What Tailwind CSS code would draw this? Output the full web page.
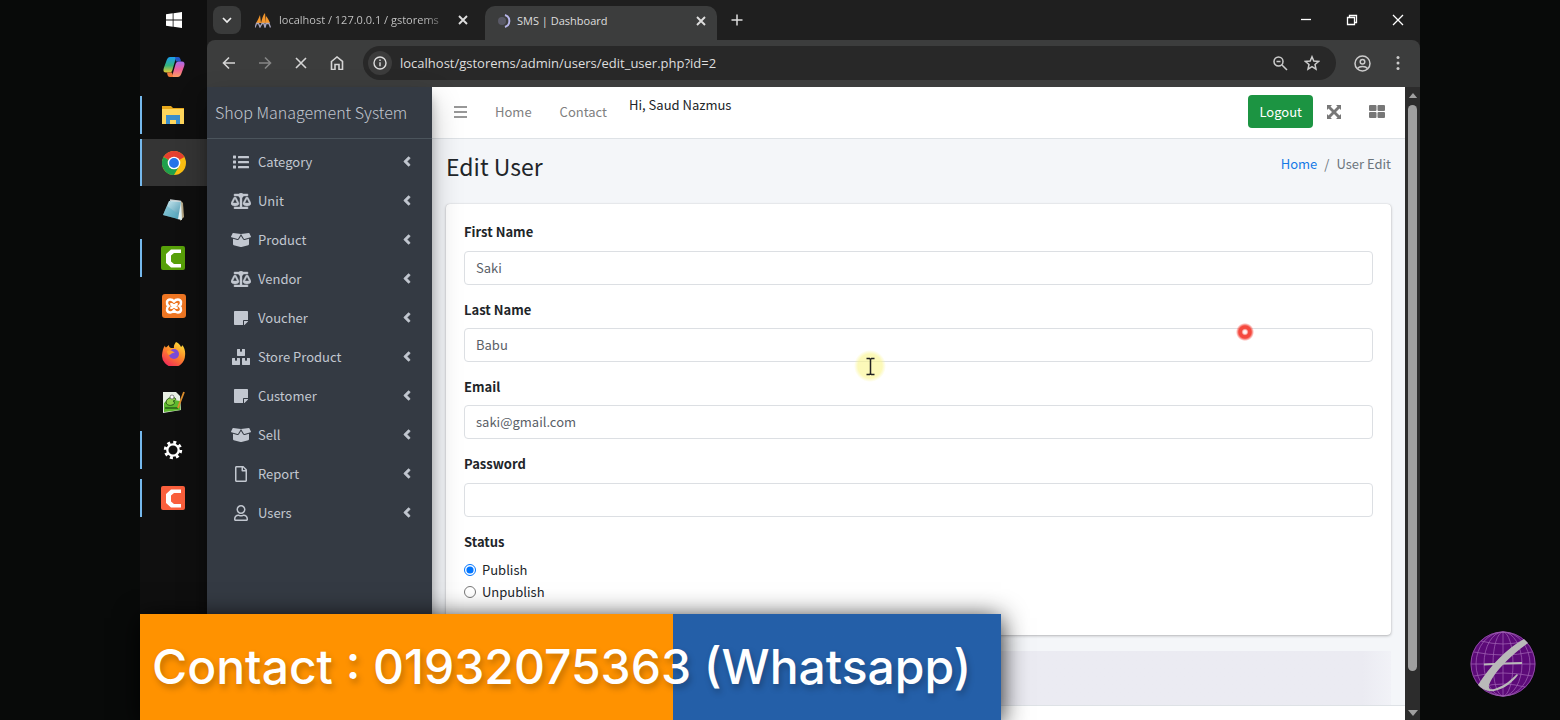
<!DOCTYPE html>
<html lang="en">
<head>
<meta charset="utf-8">
<title>SMS | Dashboard</title>
<script src="https://cdn.jsdelivr.net/npm/@tailwindcss/browser@4"></script>
</head>
<body class="bg-[#080a09]">
<svg class="hidden" aria-hidden="true">
  <symbol id="list" viewBox="0 0 512 512"><rect y="48" width="96" height="96" rx="16"/><rect y="208" width="96" height="96" rx="16"/><rect y="368" width="96" height="96" rx="16"/><rect x="160" y="60" width="352" height="72" rx="16"/><rect x="160" y="220" width="352" height="72" rx="16"/><rect x="160" y="380" width="352" height="72" rx="16"/></symbol>
  <symbol id="scale" viewBox="0 0 640 512"><path stroke="currentColor" stroke-width="14" d="M256 336h-.02c0-16.18 1.34-8.73-85.05-181.51-17.65-35.29-68.19-35.36-85.87 0C-2.06 328.75.02 320.33.02 336H0c0 44.18 57.31 80 128 80s128-35.82 128-80zM128 176l72 144H56l72-144zm511.98 160c0-16.18 1.34-8.73-85.05-181.51-17.65-35.29-68.19-35.36-85.87 0-87.12 174.26-85.04 165.84-85.04 181.51H384c0 44.18 57.31 80 128 80s128-35.82 128-80h-.02zM440 320l72-144 72 144H440zm88 128H352V153.25c23.51-10.29 41.16-31.48 46.39-57.25H528c8.84 0 16-7.16 16-16V48c0-8.84-7.16-16-16-16H383.64C369.04 12.68 346.09 0 320 0s-49.04 12.68-63.64 32H112c-8.84 0-16 7.16-16 16v32c0 8.84 7.16 16 16 16h129.61c5.23 25.76 22.87 46.96 46.39 57.25V448H112c-8.84 0-16 7.16-16 16v32c0 8.84 7.16 16 16 16h416c8.84 0 16-7.16 16-16v-32c0-8.84-7.16-16-16-16z"/></symbol>
  <symbol id="box" viewBox="0 0 640 512"><path d="M425.7 256c-16.9 0-32.8-9-41.4-23.4L320 126l-64.2 106.6c-8.7 14.5-24.6 23.5-41.5 23.5-4.5 0-9-.6-13.3-1.9L64 215v178c0 14.7 10 27.5 24.2 31l216.2 54.1c10.2 2.5 20.9 2.5 31 0L551.8 424c14.2-3.6 24.2-16.4 24.2-31V215l-137 39.1c-4.3 1.3-8.8 1.9-13.3 1.9zm212.6-112.2L586.8 41c-3.1-6.2-9.8-9.8-16.7-8.9L320 64l91.7 152.1c3.8 6.3 11.4 9.3 18.5 7.3l197.9-56.5c9.9-2.9 14.7-13.9 10.2-23.1zM53.2 41L1.7 143.8c-4.6 9.2.3 20.2 10.1 23l197.9 56.5c7.1 2 14.7-1 18.5-7.3L320 64 69.8 32.1c-6.9-.8-13.5 2.7-16.6 8.9z"/></symbol>
  <symbol id="note" viewBox="0 0 448 512"><path d="M312 320h136V56c0-13.3-10.7-24-24-24H24C10.7 32 0 42.7 0 56v400c0 13.3 10.7 24 24 24h264V344c0-13.2 10.8-24 24-24zm129 55l-98 98c-4.5 4.5-10.6 7-17 7h-6V352h128v6.1c0 6.3-2.5 12.4-7 16.9z"/></symbol>
  <symbol id="boxes" viewBox="0 0 576 512"><path d="M560 288h-80v96l-32-21.3-32 21.3v-96h-80c-8.8 0-16 7.2-16 16v192c0 8.8 7.2 16 16 16h224c8.8 0 16-7.2 16-16V304c0-8.8-7.2-16-16-16zM176 224h224c8.8 0 16-7.2 16-16V16c0-8.8-7.2-16-16-16h-80v96l-32-21.3L256 96V0h-80c-8.8 0-16 7.2-16 16v192c0 8.8 7.2 16 16 16zM240 288h-80v96l-32-21.3L96 384v-96H16c-8.8 0-16 7.2-16 16v192c0 8.8 7.2 16 16 16h224c8.8 0 16-7.2 16-16V304c0-8.8-7.2-16-16-16z"/></symbol>
  <symbol id="file" viewBox="0 0 384 512"><path d="M369.9 97.9L286 14C277 5 264.8 0 252.1 0H48C21.5 0 0 21.5 0 48v416c0 26.5 21.5 48 48 48h288c26.5 0 48-21.5 48-48V131.9c0-12.7-5.1-25-14.1-34zM332.1 128H256V51.9l76.1 76.1zM48 464V48h160v104c0 13.3 10.7 24 24 24h104v288H48z"/></symbol>
  <symbol id="user" viewBox="0 0 448 512"><path d="M313.6 304c-28.7 0-42.5 16-89.6 16-47.1 0-60.8-16-89.6-16C60.2 304 0 364.2 0 438.4V464c0 26.5 21.5 48 48 48h352c26.5 0 48-21.5 48-48v-25.6c0-74.2-60.2-134.4-134.4-134.4zM400 464H48v-25.6c0-47.6 38.8-86.4 86.4-86.4 14.6 0 38.3 16 89.6 16 51.7 0 74.9-16 89.6-16 47.6 0 86.4 38.8 86.4 86.4V464zM224 288c79.5 0 144-64.5 144-144S303.5 0 224 0 80 64.5 80 144s64.500 144 144 144zm0-240c52.9 0 96 43.1 96 96s-43.1 96-96 96-96-43.1-96-96 43.1-96 96-96z"/></symbol>
  <symbol id="left" viewBox="0 0 256 512"><path stroke="currentColor" stroke-width="24" d="M31.7 239l136-136c9.4-9.4 24.6-9.4 33.9 0l22.6 22.6c9.4 9.4 9.4 24.6 0 33.9L127.9 256l96.4 96.4c9.4 9.4 9.4 24.6 0 33.9L201.7 409c-9.4 9.4-24.6 9.4-33.9 0l-136-136c-9.5-9.4-9.5-24.6-.1-34z"/></symbol>
  <symbol id="x" viewBox="0 0 12 12"><path d="M2 2l8 8m0-8l-8 8" fill="none" stroke="currentColor" stroke-width="1.9"/></symbol>
</svg>

<div class="relative flex h-screen overflow-hidden px-[140px] font-['Noto_Sans_CJK_SC',sans-serif]">

  <!-- Taskbar -->
  <nav aria-label="Taskbar" class="flex w-[67px] shrink-0 flex-col bg-[#0f0f0f]">
    <button aria-label="Start" class="flex h-[43px] shrink-0 items-center justify-center pb-1"><svg class="size-4" viewBox="0 0 16 16" fill="#fff"><path d="M0 2.300L6.700 1.300v6.200H0zM7.500 1.200L16 0v7.500H7.500zM0 8.400h6.700v6.300L0 13.700zM7.500 8.400H16V16l-8.500-1.200z"/></svg></button>
    <button aria-label="Copilot" class="flex h-12 shrink-0 items-center justify-center"><svg class="size-6" viewBox="0 0 24 24"><defs><linearGradient id="cpa" x1="0" y1="0" x2="0" y2="1"><stop offset="0" stop-color="#1b9df0"/><stop offset=".55" stop-color="#35b47d"/><stop offset="1" stop-color="#e8c932"/></linearGradient><linearGradient id="cpb" x1="0" y1="0" x2="0" y2="1"><stop offset="0" stop-color="#a56cf0"/><stop offset=".5" stop-color="#ee5f9b"/><stop offset="1" stop-color="#fb9e62"/></linearGradient></defs><path d="M15 2H8.500C6 2 5 4 4.200 6.500L1.800 13c-1 3 0 4.500 2.400 4.500h3.300c1.600 0 2.400-1 2.900-2.600L13 6c.6-2 1-3 3-3z" fill="url(#cpa)"/><path d="M13 2h3c2 0 2.400 1.500 3 4.500h-5z" fill="#2257c9"/><path d="M9 22h6.500c2.500 0 3.500-2 4.300-4.500l2.400-6.500c1-3 0-4.500-2.400-4.500h-3.300c-1.600 0-2.400 1-2.900 2.600L11 18c-.6 2-1 3-3 3z" fill="url(#cpb)"/><path d="M11 22H8c-2 0-2.500-1.500-3-4.500h5z" fill="#f27a3c"/></svg></button>
    <button aria-label="File Explorer" class="flex h-12 shrink-0 items-center justify-center"><svg class="h-10 w-full" viewBox="0 0 67 40" fill="none"><path d="M0 1h2v38H0z" fill="#76b9ed"/><path d="M22 11h9l2 2h11v16H22z" fill="#e8a91c"/><path d="M22 14h22v15H22z" fill="#ffd65c"/><path d="M26 29v-9h14v9h-4v-4h-6v4z" fill="#3c8ecb"/></svg></button>
    <button aria-label="Chrome" class="flex h-[47px] shrink-0 items-center justify-center border-x-2 border-l-[#76b9ed] border-r-[#343434] bg-[#343434]"><svg class="size-6" viewBox="0 0 24 24"><circle cx="12" cy="12" r="12" fill="#fbbf12"/><path d="M12 12L1.600 6A12 12 0 0 1 22.400 6z" fill="#e5402f"/><path d="M1.600 6A12 12 0 0 0 12 24l5.200-9z" fill="#1fa04c"/><circle cx="12" cy="12" r="6.300" fill="#fff"/><circle cx="12" cy="12" r="4.900" fill="#2674e8"/></svg></button>
    <button aria-label="Notepad" class="flex h-12 shrink-0 items-center justify-center"><svg class="size-6" viewBox="0 0 24 24"><defs><linearGradient id="np" x1="0" y1="0" x2="1" y2="1"><stop offset="0" stop-color="#d5f1f7"/><stop offset="1" stop-color="#3f8ea8"/></linearGradient></defs><path d="M19 3l2 2 1 14-4 4z" fill="#b2a483"/><path d="M8 2l11 1 1 19-5-1z" fill="#dff0f3"/><path d="M7 3l12 1-3 17L1 17z" fill="url(#np)"/><path d="M8 2l11 1.500" stroke="#c9d2d4" stroke-width="1.500"/><path d="M5 8l11 8v5L1 17z" fill="#5ab0c6" opacity=".5"/></svg></button>
    <button aria-label="Camtasia" class="flex h-12 shrink-0 items-center justify-center"><svg class="h-10 w-full" viewBox="0 0 67 40" fill="none"><path d="M0 1h2v38H0z" fill="#76b9ed"/><rect x="21" y="8" width="24" height="24" rx="2" fill="#57a009"/><path d="M41 11.500H31l-5 4.500v9l5 4.500h10V26h-7l-3-2.500v-6l3-2.500h7z" fill="#fff"/></svg></button>
    <button aria-label="XAMPP" class="flex h-12 shrink-0 items-center justify-center"><svg class="size-6" viewBox="0 0 24 24" fill="none"><rect width="24" height="24" rx="3" fill="#ee7623"/><path d="M8.200 5.500c2 0 3 1 3.800 2 .8-1 1.800-2 3.800-2 3.800 0 4.200 4.500 1.700 6.500 2.500 2 2.100 6.500-1.700 6.500-2 0-3-1-3.800-2-.8 1-1.800 2-3.800 2-3.800 0-4.200-4.500-1.700-6.500-2.500-2-2.100-6.500 1.700-6.500zM9.500 9v1.500c0 1 5 1 5 0V9M9.500 15v-1.500c0-1 5-1 5 0V15" stroke="#fff" stroke-width="2.500"/></svg></button>
    <button aria-label="Firefox" class="flex h-12 shrink-0 items-center justify-center"><svg class="size-6" viewBox="0 0 24 24"><defs><linearGradient id="ff" x1=".8" y1="0" x2=".2" y2="1"><stop offset="0" stop-color="#ffe23a"/><stop offset=".45" stop-color="#ff8a2a"/><stop offset="1" stop-color="#f0205c"/></linearGradient></defs><path d="M14 0c3 1 4 3 5 5 1-.5 1-1.500 1-2 3 3 3.500 7 3 11a11.500 11.500 0 0 1-23-1C.5 9 1 6 3 3.500c0 1 .5 2 1 2L7 3c0 2 .5 2.500 2 3h3c-.5-2 .5-4 2-6z" fill="url(#ff)"/><circle cx="12" cy="12" r="5" fill="#7a4bd8"/><path d="M5 9c3-2 6 0 8 2-2-.5-3 .5-4.500 1.500C6 14 5 11 5 9z" fill="#ff9a2c"/></svg></button>
    <button aria-label="Notepad++" class="flex h-12 shrink-0 items-center justify-center"><svg class="size-6" viewBox="0 0 24 24"><path d="M1 2h13l4 4 1 14-18 3z" fill="#e9f0e4"/><path d="M2 13c4-4 10-3 16-2l.5 9L2 22z" fill="#5db92f"/><path d="M4 12c1-5 7-5 9-4 2 2-1 3-2 3 2 0 2 4-1 4-2 1-6 0-6-3z" fill="#8dcf49" stroke="#275416"/><circle cx="10" cy="7" r="2" fill="#fff" stroke="#444" stroke-width=".6"/><path d="M3 18h13" stroke="#265f16" stroke-width="1.500"/><path d="M22 2l-5 13-1 3" stroke="#dd8e2c" stroke-width="1.800" fill="none"/></svg></button>
    <button aria-label="Settings" class="flex h-12 shrink-0 items-center justify-center"><svg class="h-10 w-full" viewBox="0 0 67 40" fill="none" stroke="#fff"><path d="M0 1h2v38H0z" fill="#76b9ed" stroke="none"/><circle cx="33" cy="20" r="5.700" stroke-width="2.300"/><circle cx="33" cy="20" r="7.700" stroke-width="3" stroke-dasharray="3 3.050"/></svg></button>
    <button aria-label="Camtasia Recorder" class="flex h-12 shrink-0 items-center justify-center"><svg class="h-10 w-full" viewBox="0 0 67 40" fill="none"><path d="M0 1h2v38H0z" fill="#76b9ed"/><rect x="21" y="8" width="24" height="24" rx="2" fill="#fa5f3c"/><path d="M41 11.500H31l-5 4.500v9l5 4.500h10V26h-7l-3-2.500v-6l3-2.500h7z" fill="#fff"/></svg></button>
  </nav>

  <!-- Browser window -->
  <div class="flex min-w-0 flex-1 flex-col bg-[#1f1f1f] font-['Open_Sans',sans-serif]">
    <div class="flex h-10 shrink-0 items-center text-[11px] text-[#dedede]">
      <button aria-label="Search tabs" class="ml-[6px] flex size-7 items-center justify-center rounded-lg bg-[#3a3b3b]"><svg class="size-3" viewBox="0 0 12 12" fill="none" stroke="#eee" stroke-width="1.700"><path d="M2 4l4 4 4-4"/></svg></button>
      <div class="flex h-8 w-[244px] items-center gap-2 pl-[14px] pr-[16px]">
        <svg class="size-4 shrink-0" viewBox="0 0 16 16"><path d="M1 11C3 8 4 5 5 3l1 8zM6 11c1-4 2-8 4-10l1 10zM11 11V4c2 2 3 5 4 7z" fill="#f3962c"/><path d="M0 15.500l1.500-4h2L5 15l2-3.500h2l1 4 1-4h3l1.500 4" stroke="#a6a4bd" stroke-width="1.300" fill="none"/></svg>
        <span class="min-w-0 flex-1 whitespace-nowrap bg-linear-to-r from-[#c9c9c9] from-85% to-[#333333] bg-clip-text text-transparent">localhost / 127.0.0.1 / gstorems</span>
        <button aria-label="Close tab"><svg class="size-3"><use href="#x"/></svg></button>
      </div>
      <div class="flex h-[34px] w-[232px] items-center self-end rounded-t-[10px] bg-[#3c3d3d] pb-1 pl-[11px] pr-[10px]">
        <svg class="mr-1 size-4" viewBox="0 0 16 16" fill="none"><circle cx="6" cy="8" r="4" fill="#595966"/><path d="M9 2a6.300 6.300 0 0 1 0 12" stroke="#b8b7ea" stroke-width="2"/></svg>
        <span class="flex-1 pl-px">SMS | Dashboard</span>
        <button aria-label="Close tab"><svg class="size-3"><use href="#x"/></svg></button>
      </div>
      <button aria-label="New tab" class="ml-[14px]"><svg class="size-3" viewBox="0 0 12 12" stroke="#ddd" stroke-width="1.500"><path d="M6 .5v11M.5 6h11"/></svg></button>
      <div class="ml-auto flex items-center gap-[34px] pr-4 text-white">
        <button aria-label="Minimize"><svg class="size-3" viewBox="0 0 12 12" stroke="#fff" stroke-width="1.300"><path d="M1 5.500h10"/></svg></button>
        <button aria-label="Restore"><svg class="size-3" viewBox="0 0 12 12" fill="none" stroke="#fff" stroke-width="1.300"><path d="M1.500 3.500h7v7h-7zM3.500 3.500v-2h7v7h-2"/></svg></button>
        <button aria-label="Close"><svg class="size-3" viewBox="0 0 12 12" stroke="#fff" stroke-width="1.300"><path d="M1 1l10 10M11 1L1 11"/></svg></button>
      </div>
    </div>
    <div class="flex h-[47px] shrink-0 items-center rounded-t-lg bg-[#3c3d3d] pb-px text-[#d0d0d0]">
      <div class="flex w-[156px] items-center gap-[22px] pl-[15px]">
        <button aria-label="Back"><svg class="size-[14px]" viewBox="0 0 14 14" fill="none" stroke="#d5d5d5" stroke-width="1.600"><path d="M13 7H2M7 1.500L1.500 7 7 12.500"/></svg></button>
        <button aria-label="Forward"><svg class="size-[14px]" viewBox="0 0 14 14" fill="none" stroke="#858585" stroke-width="1.600"><path d="M1 7h11M7 1.500L12.500 7 7 12.500"/></svg></button>
        <button aria-label="Stop"><svg class="size-[14px]" viewBox="0 0 14 14" fill="none" stroke="#d5d5d5" stroke-width="1.600"><path d="M2 2l10 10M12 2L2 12"/></svg></button>
        <button aria-label="Home"><svg class="size-[14px]" viewBox="0 0 14 14" fill="none" stroke="#d5d5d5" stroke-width="1.600"><path d="M1.500 5.500L7 1l5.500 4.500v8H9V8.500H5v5H1.500z"/></svg></button>
      </div>
      <div class="flex h-[34px] flex-1 items-center rounded-full bg-[#282828] px-[5px]">
        <span class="flex size-6 items-center justify-center rounded-full bg-[#3c3c3c]"><svg class="size-[14px]" viewBox="0 0 14 14" fill="none" stroke="#ddd" stroke-width="1.400"><circle cx="7" cy="7" r="6"/><path d="M7 6.300v4M7 3.500v1.500"/></svg></span>
        <input aria-label="Address" value="localhost/gstorems/admin/users/edit_user.php?id=2" class="h-6 min-w-0 flex-1 bg-transparent pl-2 text-[13px] leading-6 text-[#dedede] outline-none">
        <button aria-label="Zoom" class="mr-4"><svg class="size-[15px]" viewBox="0 0 15 15" fill="none" stroke="#ccc" stroke-width="1.500"><circle cx="5.500" cy="5.500" r="4.500"/><path d="M9 9l5 5M3.500 5.500h4"/></svg></button>
        <button aria-label="Bookmark" class="mr-[11px]"><svg class="size-4" viewBox="0 0 16 16" fill="none" stroke="#ccc" stroke-width="1.500"><path d="M8 1.800l1.800 4.300 4.700.4L11 9.500l1 4.600-4-2.400-4 2.400 1-4.600L1.500 6.500l4.700-.4z"/></svg></button>
      </div>
      <button aria-label="Profile" class="ml-[18px]"><svg class="size-[17px]" viewBox="0 0 17 17" fill="none" stroke="#ccc" stroke-width="1.500"><circle cx="8.500" cy="8.500" r="7.500"/><circle cx="8.500" cy="6.800" r="2.300"/><path d="M3.500 13.500c2-2.700 8-2.700 10 0"/></svg></button>
      <button aria-label="Menu" class="ml-[19px] mr-[14px]"><svg class="h-4 w-4" viewBox="0 0 16 16" fill="#ccc"><circle cx="8" cy="2.500" r="1.500"/><circle cx="8" cy="8" r="1.500"/><circle cx="8" cy="13.500" r="1.500"/></svg></button>
    </div>

    <!-- Web page -->
    <div class="flex min-h-0 flex-1 font-['Noto_Sans_CJK_SC',sans-serif] text-[13px] text-[#212529]">
      <aside class="z-10 w-[225px] shrink-0 bg-[#343a43] text-[#c2c7d0] shadow-[0_14px_28px_rgba(0,0,0,0.25),0_10px_10px_rgba(0,0,0,0.22)]">
        <a href="#" class="flex h-[52px] items-center border-b border-[#4b545c] pl-2 pb-px text-[16px] font-light leading-6">Shop Management System</a>
        <nav aria-label="Main" class="flex flex-col gap-1 pl-6 pr-[21px] pt-[5px]">
          <a href="#" class="flex h-[35px] items-center"><svg class="mr-[7px] h-4 w-5 fill-current"><use href="#list"/></svg><span class="flex-1">Category</span><svg class="h-[15px] w-2 fill-current"><use href="#left"/></svg></a>
          <a href="#" class="flex h-[35px] items-center"><svg class="mr-[7px] h-4 w-5 fill-current"><use href="#scale"/></svg><span class="flex-1">Unit</span><svg class="h-[15px] w-2 fill-current"><use href="#left"/></svg></a>
          <a href="#" class="flex h-[35px] items-center"><svg class="mr-[7px] h-4 w-5 fill-current"><use href="#box"/></svg><span class="flex-1">Product</span><svg class="h-[15px] w-2 fill-current"><use href="#left"/></svg></a>
          <a href="#" class="flex h-[35px] items-center"><svg class="mr-[7px] h-4 w-5 fill-current"><use href="#scale"/></svg><span class="flex-1">Vendor</span><svg class="h-[15px] w-2 fill-current"><use href="#left"/></svg></a>
          <a href="#" class="flex h-[35px] items-center"><svg class="mr-[7px] h-4 w-5 fill-current"><use href="#note"/></svg><span class="flex-1">Voucher</span><svg class="h-[15px] w-2 fill-current"><use href="#left"/></svg></a>
          <a href="#" class="flex h-[35px] items-center"><svg class="mr-[7px] h-4 w-5 fill-current"><use href="#boxes"/></svg><span class="flex-1">Store Product</span><svg class="h-[15px] w-2 fill-current"><use href="#left"/></svg></a>
          <a href="#" class="flex h-[35px] items-center"><svg class="mr-[7px] h-4 w-5 fill-current"><use href="#note"/></svg><span class="flex-1">Customer</span><svg class="h-[15px] w-2 fill-current"><use href="#left"/></svg></a>
          <a href="#" class="flex h-[35px] items-center"><svg class="mr-[7px] h-4 w-5 fill-current"><use href="#box"/></svg><span class="flex-1">Sell</span><svg class="h-[15px] w-2 fill-current"><use href="#left"/></svg></a>
          <a href="#" class="flex h-[35px] items-center"><svg class="mr-[7px] h-4 w-5 fill-current"><use href="#file"/></svg><span class="flex-1">Report</span><svg class="h-[15px] w-2 fill-current"><use href="#left"/></svg></a>
          <a href="#" class="flex h-[35px] items-center"><svg class="mr-[7px] h-4 w-5 fill-current"><use href="#user"/></svg><span class="flex-1">Users</span><svg class="h-[15px] w-2 fill-current"><use href="#left"/></svg></a>
        </nav>
      </aside>

      <div class="flex min-w-0 flex-1 flex-col bg-[#f4f6f9]">
        <header class="flex h-[52px] shrink-0 items-center border-b border-[#dee2e6] bg-white pb-[2px] pl-[22px] pr-5 text-[#808080]">
          <button aria-label="Toggle menu"><svg class="h-3 w-[13px]" viewBox="0 0 13 12" stroke="#777" stroke-width="1.700"><path d="M0 1h13M0 6h13M0 11h13"/></svg></button>
          <a href="#" class="ml-7">Home</a>
          <a href="#" class="ml-7">Contact</a>
          <span class="ml-[22px] self-start pt-2 text-[#212529]">Hi, Saud Nazmus</span>
          <button class="ml-auto h-[33px] rounded-[4px] bg-[#1c9442] px-[11px] text-white">Logout</button>
          <button aria-label="Full screen" class="ml-[14px]"><svg class="size-[14px]" viewBox="0 0 14 14" fill="#777"><path d="M0 0h5L3.500 1.500 7 5l3.500-3.500L9 0h5v5l-1.500-1.500L9 7l3.500 3.500L14 9v5H9l1.500-1.500L7 9l-3.500 3.500L5 14H0V9l1.500 1.500L5 7 1.500 3.500 0 5z"/></svg></button>
          <button aria-label="Widgets" class="ml-7"><svg class="h-[13px] w-4" viewBox="0 0 16 13" fill="#777"><rect width="7.500" height="6" rx="1"/><rect x="8.500" width="7.500" height="6" rx="1"/><rect y="7" width="7.500" height="6" rx="1"/><rect x="8.500" y="7" width="7.500" height="6" rx="1"/></svg></button>
        </header>
        <main class="px-[14px]">
          <div class="flex h-[65px] items-start justify-between">
            <h1 class="pt-[11px] text-[23px] leading-8">Edit User</h1>
            <nav aria-label="Breadcrumb" class="flex gap-[7px] pt-[15px] leading-5 text-[#6c757d]"><a href="#" class="text-[#1579e6]">Home</a><span>/</span><span>User Edit</span></nav>
          </div>
          <form class="flex h-[431px] flex-col rounded-[4px] bg-white px-[18px] pt-[18px] shadow-[0_0_1px_rgba(0,0,0,0.2),0_1px_3px_rgba(0,0,0,0.25)]">
            <label for="fn" class="mb-[9px] font-bold leading-5">First Name</label>
            <input id="fn" value="Saki" class="mb-[15px] h-[34px] w-full rounded-[4px] border border-[#dcdfe3] px-[11px] pb-[2px] text-[#5a6067]">
            <label for="ln" class="mb-2 font-bold leading-5">Last Name</label>
            <input id="ln" value="Babu" class="mb-[15px] h-[34px] w-full rounded-[4px] border border-[#dcdfe3] px-[11px] pb-[2px] text-[#5a6067]">
            <label for="em" class="mb-2 font-bold leading-5">Email</label>
            <input id="em" type="email" value="saki@gmail.com" class="mb-[15px] h-[34px] w-full rounded-[4px] border border-[#dcdfe3] px-[11px] pb-[2px] text-[#5a6067]">
            <label for="pw" class="mb-[9px] font-bold leading-5">Password</label>
            <input id="pw" type="password" class="mb-[15px] h-[34px] w-full rounded-[4px] border border-[#dcdfe3] px-[11px] pb-[2px] text-[#5a6067]">
            <fieldset>
              <legend class="mb-[7px] font-bold leading-5">Status</legend>
              <label class="flex items-center gap-[6px] leading-[22px]"><input type="radio" name="st" checked class="size-3 accent-[#0075ff]">Publish</label>
              <label class="flex items-center gap-[6px] leading-[22px]"><input type="radio" name="st" class="size-3">Unpublish</label>
            </fieldset>
          </form>
          <div class="mt-4 h-[54px] bg-linear-to-r from-[#ebebf2] from-97% to-[#f1f2f7]"></div>
        </main>
        <footer class="flex-1 border-t border-[#dee2e6] bg-white"></footer>
      </div>
      <div class="flex w-[15px] shrink-0 flex-col items-center justify-between bg-[#2c2c2c] pt-[6px] pb-1">
        <svg class="h-[5px] w-[10px]" viewBox="0 0 10 6" fill="#a0a0a0"><path d="M0 6l5-6 5 6z"/></svg>
        <div class="mt-[7px] mb-[39px] w-[9px] flex-1 rounded-full bg-[#9f9f9f]"></div>
        <svg class="h-[6px] w-[10px] shrink-0" viewBox="0 0 10 6" fill="#a0a0a0"><path d="M0 0l5 6 5-6z"/></svg>
      </div>
    </div>
  </div>

  <!-- Pointer and click marker -->
  <svg class="absolute left-[854px] top-[350px] z-20 size-8" viewBox="0 0 32 32" fill="none"><defs><radialGradient id="halo"><stop offset=".75" stop-color="#faf58a" stop-opacity=".6"/><stop offset="1" stop-color="#faf58a" stop-opacity="0"/></radialGradient></defs><circle cx="16" cy="16" r="16" fill="url(#halo)"/><path d="M12.500 8.500h3l1 1 1-1h3M12.500 24.500h3l1-1 1 1h3M16.500 9v15" stroke="#222" stroke-width="1.500"/></svg>
  <svg class="absolute left-[1235px] top-[322px] z-20 size-5" viewBox="0 0 20 20"><defs><radialGradient id="click"><stop offset="0" stop-color="#fff"/><stop offset=".18" stop-color="#ffe3e0"/><stop offset=".36" stop-color="#f5493e"/><stop offset=".62" stop-color="#f5493e"/><stop offset=".9" stop-color="#f5493e" stop-opacity="0"/></radialGradient></defs><circle cx="10" cy="10" r="10" fill="url(#click)"/></svg>

  <!-- Contact banner -->
  <div class="absolute bottom-0 left-[140px] z-20 flex h-[106px] w-[861px] items-center whitespace-nowrap bg-linear-to-r from-[#ff9200] from-[533px] to-[#245fa8] to-[533px] pl-3 font-['Inter',sans-serif] text-[48px] font-medium text-white shadow-[0_4px_24px_rgba(0,0,0,0.9)] text-shadow-[2px_4px_6px_rgba(0,0,0,0.25)]">Contact : 01932075363 (Whatsapp)</div>

  <!-- Channel logo -->
  <svg class="absolute bottom-[23px] right-[24px] z-20 size-[66px]" viewBox="0 0 66 66" fill="none"><circle cx="33" cy="33" r="32.500" fill="#5c0a78"/><g stroke="#9a5cae" stroke-width=".8"><circle cx="33" cy="33" r="32"/><path d="M33 1v64M1 33h64M4 21q29 6 58 0M11 10q22 6 44 0M4 45q29-6 58 0M11 56q22-6 44 0"/><ellipse cx="33" cy="33" rx="10" ry="32"/><ellipse cx="33" cy="33" rx="19" ry="32"/><ellipse cx="33" cy="33" rx="27" ry="32"/></g><path d="M54 8l4 4C44 22 25 39 19 54c-1 5 3 5 8 3 8-3 14-8 20-14l1 1c-6 8-14 14-24 16-6 1-12-2-16-6C20 35 36 18 54 8z" fill="#b9b9b9"/><path d="M14 33.500l20-1 18-.5" stroke="#b9b9b9" stroke-width="2"/></svg>
</div>
</body>
</html>
